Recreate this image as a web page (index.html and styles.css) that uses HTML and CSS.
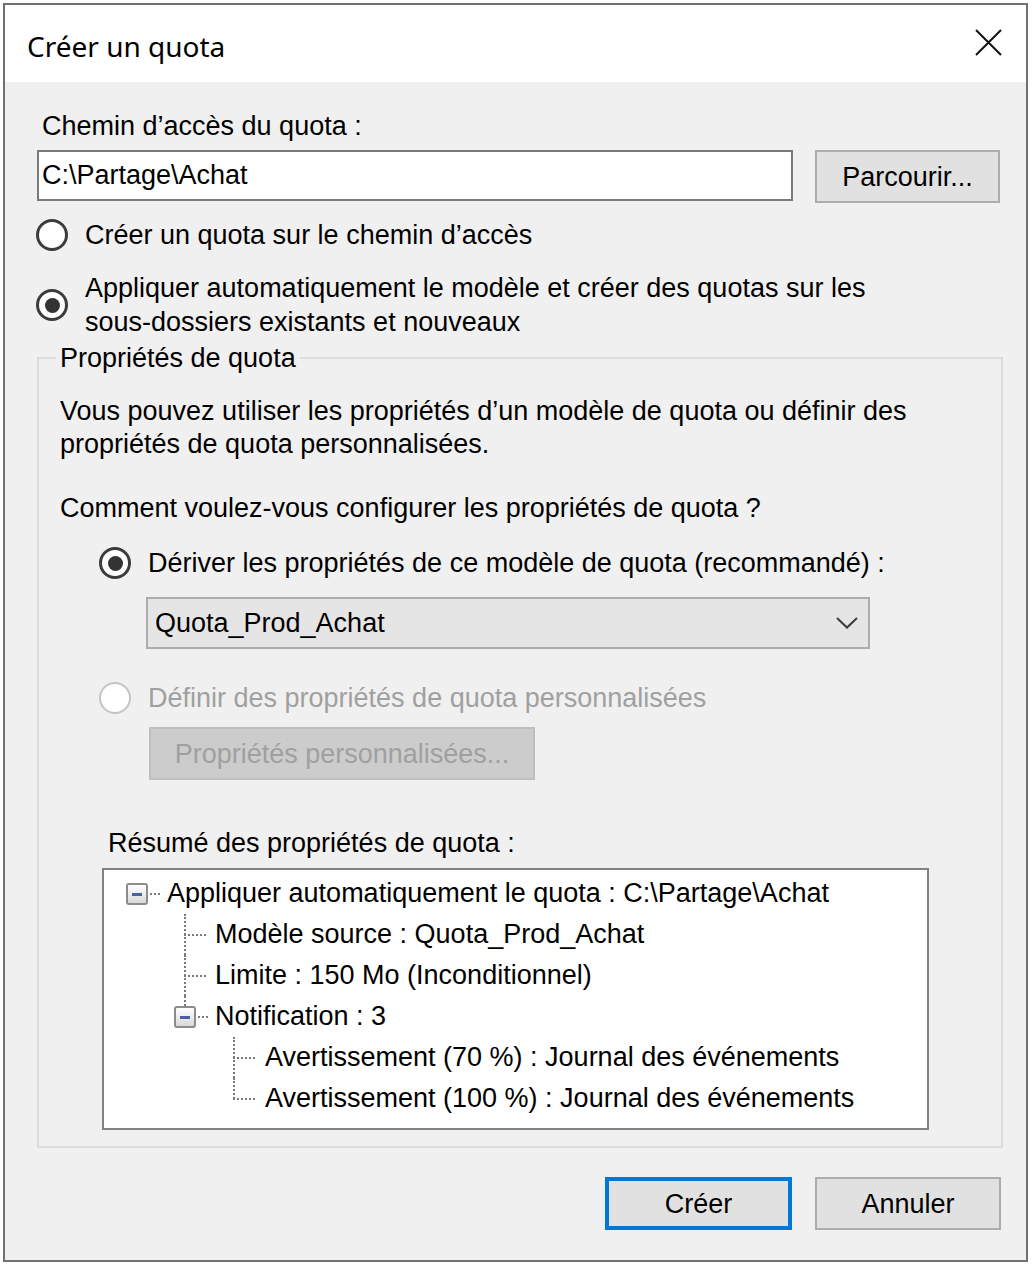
FILE: index.html
```html
<!DOCTYPE html>
<html lang="fr">
<head>
    <meta charset="UTF-8">
    <title>Créer un quota</title>
    <link rel="stylesheet" href="styles.css">
</head>
<body>
<div class="window">
    <div class="titlebar">
        <span class="title">Créer un quota</span>
        <svg class="close" width="27" height="27" viewBox="0 0 27 27">
            <path d="M1 1 L26 26 M26 1 L1 26" stroke="#111" stroke-width="2" fill="none"/>
        </svg>
    </div>

    <div class="content">
        <div class="label">Chemin d’accès du quota :</div>
        <div class="path-row">
            <div class="textbox">C:\Partage\Achat</div>
            <div class="button browse">Parcourir...</div>
        </div>

        <div class="radio-row path-only">
            <span class="radio"></span>
            <span>Créer un quota sur le chemin d’accès</span>
        </div>
        <div class="radio-row auto">
            <span class="radio checked"></span>
            <span>Appliquer automatiquement le modèle et créer des quotas sur les<br>sous-dossiers existants et nouveaux</span>
        </div>

        <fieldset class="group">
            <legend>Propriétés de quota</legend>
            <p class="intro">Vous pouvez utiliser les propriétés d’un modèle de quota ou définir des<br>propriétés de quota personnalisées.</p>
            <p class="question">Comment voulez-vous configurer les propriétés de quota ?</p>

            <div class="choices">
                <div class="radio-row derive">
                    <span class="radio checked"></span>
                    <span>Dériver les propriétés de ce modèle de quota (recommandé) :</span>
                </div>
                <div class="combo">
                    <span>Quota_Prod_Achat</span>
                    <svg width="22" height="12" viewBox="0 0 22 12">
                        <path d="M1 1 L11 10.5 L21 1" stroke="#3c3c3c" stroke-width="2" fill="none"/>
                    </svg>
                </div>
                <div class="radio-row custom disabled">
                    <span class="radio"></span>
                    <span>Définir des propriétés de quota personnalisées</span>
                </div>
                <div class="button custom-btn disabled">Propriétés personnalisées...</div>
            </div>

            <div class="summary">
                <div class="label">Résumé des propriétés de quota :</div>
                <div class="tree">
                    <div class="node root"><span class="expander"></span>Appliquer automatiquement le quota : C:\Partage\Achat</div>
                    <div class="node lvl1 leaf">Modèle source : Quota_Prod_Achat</div>
                    <div class="node lvl1 leaf">Limite : 150 Mo (Inconditionnel)</div>
                    <div class="node lvl1 branch"><span class="expander"></span>Notification : 3</div>
                    <div class="node lvl2 leaf">Avertissement (70 %) : Journal des événements</div>
                    <div class="node lvl2 leaf last">Avertissement (100 %) : Journal des événements</div>
                </div>
            </div>
        </fieldset>

        <div class="actions">
            <div class="button default">Créer</div>
            <div class="button cancel">Annuler</div>
        </div>
    </div>
</div>
</body>
</html>
```

FILE: styles.css
```css
* {
    box-sizing: border-box;
}

body {
    margin: 0;
    background: #fff;
    font-family: "Liberation Sans", Arial, sans-serif;
    font-size: 27px;
    color: #000;
}

.window {
    width: 1025px;
    height: 1259px;
    margin: 3px 0 0 3px;
    border: 2px solid #717171;
    display: flex;
    flex-direction: column;
}

.titlebar {
    height: 77px;
    background: #fff;
    display: flex;
    align-items: center;
    justify-content: space-between;
    padding: 0 24px 0 22px;
}

.title {
    font-family: "Noto Sans", "Open Sans", sans-serif;
    font-size: 28px;
    padding-top: 5px;
}

.close {
    display: block;
    margin-top: -2px;
}

.content {
    flex: 1;
    background: #f0f0f0;
    padding: 0 23px 0 32px;
    line-height: 34px;
    white-space: nowrap;
}

.content > .label {
    margin-top: 27px;
    padding-left: 5px;
}

.path-row {
    display: flex;
    align-items: flex-start;
    margin-top: 7px;
}

.textbox {
    width: 756px;
    height: 51px;
    background: #fff;
    border: 2px solid #7a7a7a;
    padding-left: 3px;
    line-height: 47px;
}

.button {
    height: 53px;
    background: #e1e1e1;
    border: 2px solid #adadad;
    display: flex;
    align-items: center;
    justify-content: center;
}

.browse {
    width: 185px;
    margin-left: 22px;
}

/* radios */
.radio-row {
    display: flex;
    align-items: center;
    gap: 17px;
}

.radio {
    flex: none;
    width: 32px;
    height: 32px;
    border-radius: 50%;
    border: 3px solid #3c3c3c;
    background: #fff;
    display: flex;
    align-items: center;
    justify-content: center;
}

.radio.checked::after {
    content: "";
    width: 15px;
    height: 15px;
    border-radius: 50%;
    background: #333;
}

.path-only {
    margin: 15px 0 0 -1px;
}

.auto {
    margin: 19px 0 0 -1px;
}

/* group box */
.group {
    margin: 2px 0 0;
    border: 2px solid #dcdcdc;
    padding: 0 19px 16px 21px;
    min-width: 0;
}

.group legend {
    padding: 0 4px;
    margin-left: -4px;
}

.group p {
    margin: 0;
}

.intro {
    margin-top: 20px !important;
    line-height: 33px;
}

.question {
    margin-top: 30px !important;
}

.choices {
    padding-left: 39px;
}

.derive {
    margin-top: 21px;
}

.combo {
    margin: 17px 0 0 47px;
    width: 724px;
    height: 52px;
    background: #e5e5e5;
    border: 2px solid #adadad;
    display: flex;
    align-items: center;
    justify-content: space-between;
    padding: 0 10px 0 7px;
}

.combo svg {
    display: block;
}

.custom {
    margin-top: 32px;
}

.disabled {
    color: #a0a0a0;
}

.disabled .radio {
    border: 2px solid #c4c4c4;
}

.custom-btn {
    margin: 12px 0 0 50px;
    width: 386px;
    background: #cccccc;
    border-color: #bfbfbf;
}

/* summary tree */
.summary {
    padding-left: 42px;
}

.summary .label {
    margin-top: 46px;
    padding-left: 6px;
}

.tree {
    margin-top: 8px;
    width: 827px;
    height: 262px;
    background: #fff;
    border: 2px solid #828282;
    padding-top: 3px;
}

.node {
    position: relative;
    height: 41px;
    line-height: 41px;
}

.root {
    padding-left: 63px;
}

.lvl1 {
    padding-left: 111px;
}

.lvl2 {
    padding-left: 161px;
}

.expander {
    position: absolute;
    top: 10px;
    width: 22px;
    height: 22px;
    border: 2px solid #8c8c8c;
    border-radius: 3px;
    background: linear-gradient(#ffffff, #d8d8d8);
}

.expander::before {
    content: "";
    position: absolute;
    left: 4px;
    top: 8px;
    width: 10px;
    height: 3px;
    background: #4a5fa6;
}

.expander::after {
    content: "";
    position: absolute;
    left: 22px;
    top: 8px;
    width: 10px;
    border-top: 2px dotted #7a7a7a;
}

.root .expander {
    left: 22px;
}

.branch .expander {
    left: 70px;
}

.leaf::before,
.branch::before {
    content: "";
    position: absolute;
    top: 0;
    height: 100%;
    border-left: 2px dotted #7a7a7a;
}

.leaf::after {
    content: "";
    position: absolute;
    top: 20px;
    width: 22px;
    border-top: 2px dotted #7a7a7a;
}

.lvl1::before,
.lvl1::after {
    left: 80px;
}

.lvl2::before,
.lvl2::after {
    left: 129px;
}

.branch::before {
    height: 10px;
}

.leaf.last::before {
    height: 21px;
}

.lvl2.leaf:first-of-type::before {
    top: 0;
}

/* dialog buttons */
.actions {
    display: flex;
    justify-content: flex-end;
    gap: 23px;
    margin: 29px 2px 0 0;
}

.default {
    width: 187px;
    border: 4px solid #0078d7;
}

.cancel {
    width: 186px;
}
```
